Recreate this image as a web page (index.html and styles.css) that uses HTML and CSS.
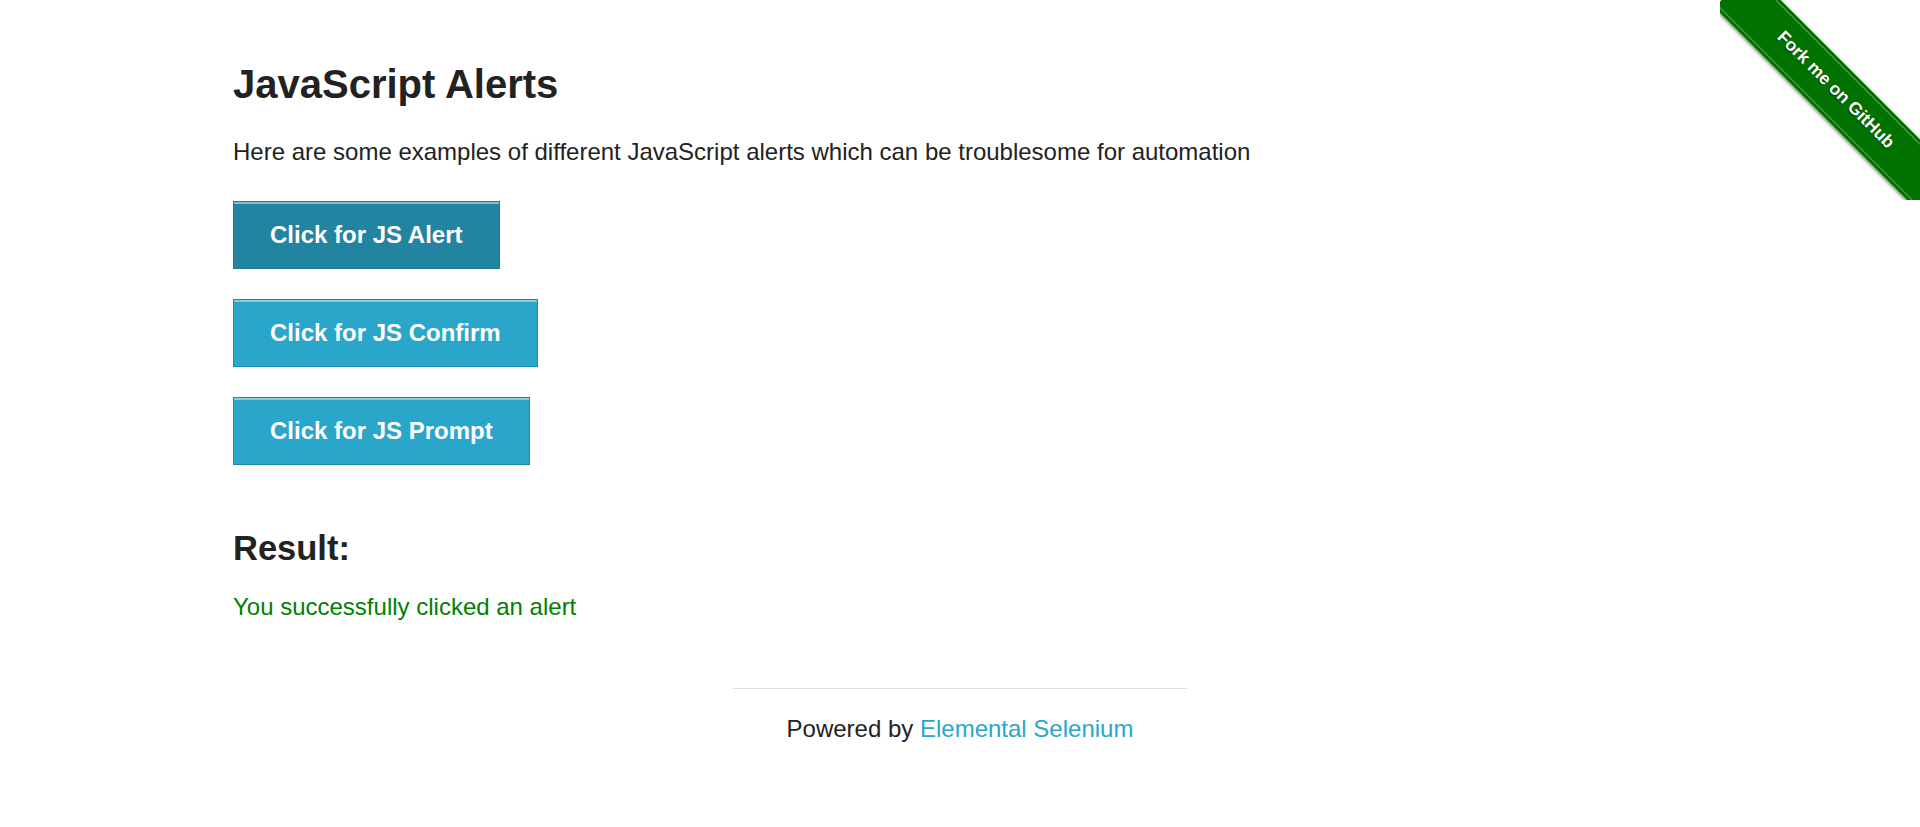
FILE: index.html
```html
<!DOCTYPE html>
<html lang="en">
<head>
<meta charset="utf-8">
<title>The Internet</title>
<link rel="stylesheet" href="styles.css">
</head>
<body>
<a class="ribbon" href="#"><span class="ribbon-band"><span class="ribbon-text">Fork me on GitHub</span></span></a>
<div class="page">
  <div class="content">
    <h3 class="title">JavaScript Alerts</h3>
    <p class="intro">Here are some examples of different JavaScript alerts which can be troublesome for automation</p>
    <ul class="buttons">
      <li class="buttons-item"><button class="btn btn-active">Click for JS Alert</button></li>
      <li class="buttons-item"><button class="btn">Click for JS Confirm</button></li>
      <li class="buttons-item"><button class="btn">Click for JS Prompt</button></li>
    </ul>
    <h4 class="result-title">Result:</h4>
    <p class="result">You successfully clicked an alert</p>
  </div>
  <div class="footer">
    <hr class="footer-rule">
    <div class="footer-text">Powered by <a class="footer-link" href="#">Elemental Selenium</a></div>
  </div>
</div>
</body>
</html>
```
FILE: styles.css
```css
html, body {
  margin: 0;
  padding: 0;
  background: #ffffff;
}
body {
  font-family: "Liberation Sans", Arial, Helvetica, sans-serif;
  color: #222222;
  position: relative;
  min-height: 827px;
  overflow: hidden;
}
.page {
  padding: 59px 233px 0 233px;
}
.title {
  margin: 0 0 28px 0;
  font-size: 40px;
  line-height: 50px;
  font-weight: bold;
  color: #222222;
}
.intro {
  margin: 0;
  font-size: 24px;
  line-height: 30px;
  color: #222222;
}
.buttons {
  list-style: none;
  margin: 34px 0 0 0;
  padding: 0;
  display: flex;
  flex-direction: column;
  align-items: flex-start;
  gap: 30px;
}
.buttons-item {
  margin: 0;
  padding: 0;
}
.btn {
  display: block;
  font-family: "Liberation Sans", Arial, Helvetica, sans-serif;
  font-size: 24px;
  font-weight: bold;
  line-height: 66px;
  height: 68px;
  padding: 0 36px;
  margin: 0;
  color: #ffffff;
  background: #2ba6cb;
  border: 1px solid #1e87a8;
  border-radius: 0;
  box-shadow: inset 0 2px 0 rgba(255, 255, 255, 0.45);
  cursor: pointer;
}
.btn-active {
  background: #2284a1;
  border-color: #1f7d98;
}
.result-title {
  margin: 63px 0 0 0;
  font-size: 34.5px;
  line-height: 40px;
  font-weight: bold;
  color: #222222;
}
.result {
  margin: 24px 0 0 0;
  font-size: 24px;
  line-height: 30px;
  color: #008000;
}
.footer {
  width: 454px;
  margin: 66px auto 0 auto;
}
.footer-rule {
  margin: 0;
  border: 0;
  border-top: 1px solid #dddddd;
  height: 0;
}
.footer-text {
  margin-top: 25px;
  text-align: center;
  font-size: 24px;
  line-height: 30px;
  color: #222222;
}
.footer-link {
  color: #2ba6cb;
  text-decoration: none;
}
.ribbon {
  position: absolute;
  top: 0;
  right: 0;
  width: 200px;
  height: 200px;
  overflow: hidden;
  text-decoration: none;
}
.ribbon-band {
  position: absolute;
  left: -31px;
  top: 69px;
  width: 300px;
  height: 52px;
  background: #007200;
  transform: rotate(45deg);
  box-shadow: 0 2px 3px rgba(0, 0, 0, 0.4);
  display: flex;
  align-items: center;
  justify-content: center;
}
.ribbon-band::before,
.ribbon-band::after {
  content: "";
  position: absolute;
  left: 0;
  right: 0;
  height: 0;
  border-top: 1px solid rgba(255, 255, 255, 0.35);
}
.ribbon-band::before {
  top: 3px;
}
.ribbon-band::after {
  bottom: 3px;
}
.ribbon-text {
  font-family: "Liberation Sans", Arial, sans-serif;
  font-size: 17.5px;
  font-weight: bold;
  color: #ffffff;
  text-shadow: 0 1px 1px rgba(0, 0, 0, 0.6);
  white-space: nowrap;
  margin: -3px 12px 0 0;
}
```
